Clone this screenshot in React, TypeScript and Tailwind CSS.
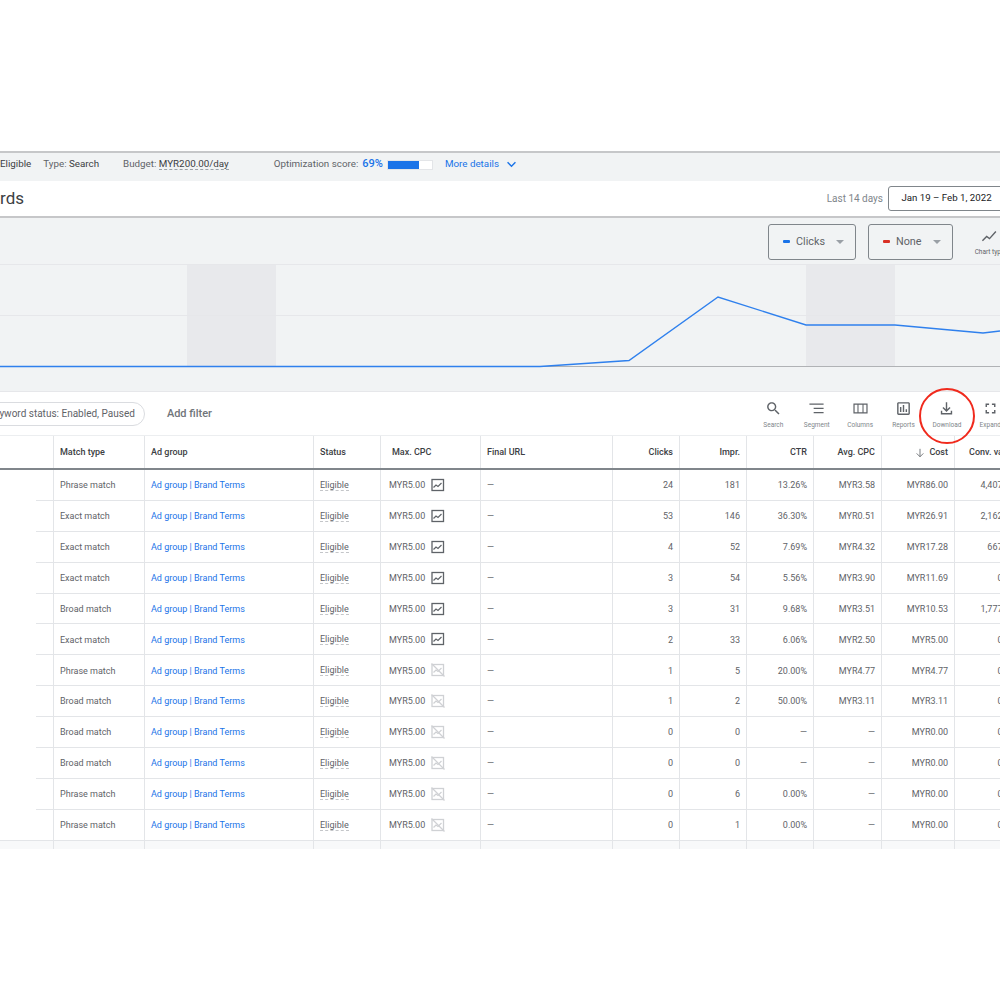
import { ReactNode } from "react";

const gridCols = "grid grid-cols-[54px_91px_169px_67px_100px_132px_67px_67px_67px_68px_73px_67px]";

const rows = [
  { match: "Phrase match", clicks: "24", impr: "181", ctr: "13.26%", cpc: "MYR3.58", cost: "MYR86.00", conv: "4,407.00", trend: true },
  { match: "Exact match", clicks: "53", impr: "146", ctr: "36.30%", cpc: "MYR0.51", cost: "MYR26.91", conv: "2,162.00", trend: true },
  { match: "Exact match", clicks: "4", impr: "52", ctr: "7.69%", cpc: "MYR4.32", cost: "MYR17.28", conv: "667.00", trend: true },
  { match: "Exact match", clicks: "3", impr: "54", ctr: "5.56%", cpc: "MYR3.90", cost: "MYR11.69", conv: "0.00", trend: true },
  { match: "Broad match", clicks: "3", impr: "31", ctr: "9.68%", cpc: "MYR3.51", cost: "MYR10.53", conv: "1,777.00", trend: true },
  { match: "Exact match", clicks: "2", impr: "33", ctr: "6.06%", cpc: "MYR2.50", cost: "MYR5.00", conv: "0.00", trend: true },
  { match: "Phrase match", clicks: "1", impr: "5", ctr: "20.00%", cpc: "MYR4.77", cost: "MYR4.77", conv: "0.00", trend: false },
  { match: "Broad match", clicks: "1", impr: "2", ctr: "50.00%", cpc: "MYR3.11", cost: "MYR3.11", conv: "0.00", trend: false },
  { match: "Broad match", clicks: "0", impr: "0", ctr: "—", cpc: "—", cost: "MYR0.00", conv: "0.00", trend: false },
  { match: "Broad match", clicks: "0", impr: "0", ctr: "—", cpc: "—", cost: "MYR0.00", conv: "0.00", trend: false },
  { match: "Phrase match", clicks: "0", impr: "6", ctr: "0.00%", cpc: "—", cost: "MYR0.00", conv: "0.00", trend: false },
  { match: "Phrase match", clicks: "0", impr: "1", ctr: "0.00%", cpc: "—", cost: "MYR0.00", conv: "0.00", trend: false },
];

function ToolIcon({ label, children }: { label: string; children: ReactNode }) {
  return (
    <div className="flex w-[43.4px] shrink-0 flex-col items-center pt-[1px]">
      <svg viewBox="0 0 24 24" className="h-[17px] w-[17px] fill-[#5f6368]">
        {children}
      </svg>
      <span className="mt-[4px] whitespace-nowrap text-[6.5px] leading-[8px] text-[#80868b]">{label}</span>
    </div>
  );
}

function TrendIcon({ active }: { active: boolean }) {
  return (
    <svg viewBox="0 0 14 14" fill="none" className="mb-[2px] ml-[6px] h-[14px] w-[14px]" stroke={active ? "#5f6368" : "#cfd1d4"}>
      <rect x="1" y="1.5" width="11.5" height="11" strokeWidth="1.3" />
      <path d="M2.5 9.500 5 7l2 1.500L10.500 5" strokeWidth="1.2" />
      {!active && <path d="M0.500 0.500 13.500 13.500" strokeWidth="1.2" />}
    </svg>
  );
}

function MetricButton({ label, color, width }: { label: string; color: string; width: string }) {
  return (
    <div className={`flex h-[36px] items-center rounded-[3px] border border-[#80868b] pl-[14px] ${width}`}>
      <span className={`h-[3px] w-[7px] rounded-[1px] ${color}`} />
      <span className="ml-[6px] pt-[1px] text-[10.8px] text-[#5f6368]">{label}</span>
      <span className="ml-auto mr-[11px] h-0 w-0 border-x-[4px] border-t-[4px] border-x-transparent border-t-[#9aa0a6]" />
    </div>
  );
}

function Th({ children, right }: { children: ReactNode; right?: boolean }) {
  return (
    <div className={`flex items-center whitespace-nowrap border-r border-[#e3e5e8] px-[6px] pt-[2px] text-[9px] font-medium text-[#3c4043] ${right ? "justify-end" : ""}`}>
      {children}
    </div>
  );
}

function Td({ children, right }: { children: ReactNode; right?: boolean }) {
  return (
    <div className={`flex items-center whitespace-nowrap border-b border-r border-[#e3e5e8] px-[6px] pt-[2px] text-[9px] text-[#5f6368] ${right ? "justify-end" : ""}`}>
      {children}
    </div>
  );
}

export default function App() {
  return (
    <div className="h-[1000px] w-[1000px] overflow-hidden bg-white font-['Roboto',sans-serif]">
      <div className="h-[151px]" />

      <div className="flex h-[30px] items-center border-t-2 border-[#c6c7c9] bg-[#f1f3f4] pb-[5px] text-[9.8px] text-[#5f6368]">
        <span className="text-[#3c4043]">Eligible</span>
        <span className="ml-[12px]">Type: <span className="text-[#3c4043]">Search</span></span>
        <span className="ml-[24px]">Budget: <span className="border-b border-dashed border-[#9aa0a6] text-[#3c4043]">MYR200.00/day</span></span>
        <span className="ml-[45px]">Optimization score:</span>
        <span className="ml-[4px] text-[11px] font-medium text-[#1a73e8]">69%</span>
        <div className="ml-[4px] h-[10px] w-[46px] border border-[#e3e5e8] bg-white">
          <div className="h-full w-[31px] bg-[#1a73e8]" />
        </div>
        <span className="ml-[12px] text-[#1a73e8]">More details</span>
        <svg viewBox="0 0 12 8" fill="none" stroke="#1a73e8" strokeWidth="1.6" className="ml-[7px] h-[7px] w-[11px]">
          <path d="M1.500 1.500 6 6l4.500-4.500" />
        </svg>
      </div>

      <div className="flex h-[37px] items-center justify-between border-b-2 border-[#c6c7c9] bg-white">
        <div className="w-[24px] overflow-hidden" dir="rtl">
          <span className="text-[17px] text-[#3c4043]" dir="ltr">Keywords</span>
        </div>
        <div className="flex items-center">
          <span className="text-[10px] text-[#80868b]">Last 14 days</span>
          <div className="-mr-[6px] ml-[5px] flex h-[25px] w-[118px] items-center justify-center rounded-[3px] border border-[#80868b] pr-[1px] text-[9.7px] text-[#202124]">
            Jan 19 – Feb 1, 2022
          </div>
        </div>
      </div>

      <div className="flex h-[46px] items-center justify-end bg-[#f1f3f4] pt-[1px]">
        <MetricButton label="Clicks" color="bg-[#1a73e8]" width="w-[88px]" />
        <div className="ml-[12px]">
          <MetricButton label="None" color="bg-[#d93025]" width="w-[85px]" />
        </div>
        <div className="-mr-[13px] ml-[13px] flex w-[47px] shrink-0 flex-col items-center">
          <svg viewBox="0 0 24 24" className="h-[17px] w-[17px] fill-none stroke-[#5f6368] stroke-2">
            <path d="M2 18l6-6 4 3 9-10" />
          </svg>
          <span className="mt-[3px] whitespace-nowrap text-[6.5px] leading-[8px] text-[#5f6368]">Chart type</span>
        </div>
      </div>

      <svg viewBox="0 0 1000 128" className="block h-[128px] w-[1000px] bg-[#f1f3f4]">
        <rect x="187" y="0" width="89" height="102" fill="#e8e9ec" />
        <rect x="806" y="0" width="89" height="102" fill="#e8e9ec" />
        <path d="M0 0.500H1000M0 51.500H1000" stroke="#e6e7ea" strokeWidth="1" />
        <path d="M0 102.500H1000" stroke="#b0b2b5" strokeWidth="1.200" />
        <path d="M0 102.500H540L629 96.500L718 33L806 61H895L983 69L1000 67" fill="none" stroke="#2f80ed" strokeWidth="1.400" />
        <path d="M0 127.500H1000" stroke="#e6e7ea" strokeWidth="1" />
      </svg>

      <div className="relative flex h-[43px] items-center bg-white">
        <div className="-ml-[22px] flex h-[24px] items-center rounded-full border border-[#dadce0] px-[9px] text-[10px] text-[#5f6368]">
          Keyword status: Enabled, Paused
        </div>
        <span className="ml-[22px] pt-[1px] text-[11px] font-medium text-[#70757a]">Add filter</span>
        <div className="-mr-[12px] ml-auto flex">
          <ToolIcon label="Search">
            <path d="M15.500 14h-.79l-.28-.27C15.410 12.590 16 11.110 16 9.500 16 5.910 13.090 3 9.500 3S3 5.910 3 9.500 5.910 16 9.500 16c1.610 0 3.090-.59 4.230-1.570l.27.28v.79l5 4.990L20.490 19l-4.990-5zm-6 0C7.010 14 5 11.990 5 9.500S7.010 5 9.500 5 14 7.010 14 9.500 11.990 14 9.500 14z" />
          </ToolIcon>
          <ToolIcon label="Segment">
            <path d="M2 5h20v1.800H2zM8 11h14v1.800H8zM8 17h14v1.800H8z" />
          </ToolIcon>
          <ToolIcon label="Columns">
            <path d="M2 5h20v14H2zm1.700 1.700v10.600h4V6.700zm5.500 0v10.600h5.600V6.700zm7.100 0v10.600h4V6.700z" fillRule="evenodd" />
          </ToolIcon>
          <ToolIcon label="Reports">
            <path d="M19 3H5c-1.100 0-2 .9-2 2v14c0 1.100.9 2 2 2h14c1.100 0 2-.9 2-2V5c0-1.100-.9-2-2-2zm0 16H5V5h14v14zM7 10h2v7H7zm4-3h2v10h-2zm4 6h2v4h-2z" />
          </ToolIcon>
          <ToolIcon label="Download">
            <path d="M11 3h2v10.200l3.300-3.300 1.400 1.400L12 17l-5.700-5.700 1.400-1.400L11 13.200zM4 15h2v3.500h12V15h2v5.500H4z" />
          </ToolIcon>
          <ToolIcon label="Expand">
            <path d="M7 14H5v5h5v-2H7v-3zm-2-4h2V7h3V5H5v5zm12 7h-3v2h5v-5h-2v3zM14 5v2h3v3h2V5h-5z" />
          </ToolIcon>
        </div>
        <div className="absolute left-[919px] top-[-4px] h-[56px] w-[56px] rounded-full border-2 border-[#f02a1d]" />
      </div>

      <div className="w-[1000px] overflow-hidden">
        <div className={`${gridCols} h-[35px] w-[1022px] border-b-2 border-t border-b-[#80868b] border-t-[#eceef0]`}>
          <Th>{""}</Th>
          <Th>Match type</Th>
          <Th>Ad group</Th>
          <Th>Status</Th>
          <Th><span className="ml-[5px]">Max. CPC</span></Th>
          <Th>Final URL</Th>
          <Th right>Clicks</Th>
          <Th right>Impr.</Th>
          <Th right>CTR</Th>
          <Th right>Avg. CPC</Th>
          <Th right>
            <svg viewBox="0 0 12 12" fill="none" stroke="#5f6368" strokeWidth="1" className="mr-[4px] h-[10px] w-[10px]">
              <path d="M6 1v9.500M2 6.500l4 4 4-4" />
            </svg>
            Cost
          </Th>
          <Th right>Conv. value</Th>
        </div>

        {rows.map((row, index) => (
          <div key={index} className={`${gridCols} h-[30.9px] w-[1022px]`}>
            <div className={`border-r border-[#e3e5e8] ${index === rows.length - 1 ? "" : "pl-[36px]"}`}>
              <div className="h-full border-b border-[#e3e5e8]" />
            </div>
            <Td>{row.match}</Td>
            <Td><span className="text-[#1a73e8]">Ad group | Brand Terms</span></Td>
            <Td><span className="mb-[1px] border-b border-dashed border-[#c4c6c9] leading-[10px]">Eligible</span></Td>
            <Td><span className="ml-[2px]">MYR5.00</span><TrendIcon active={row.trend} /></Td>
            <Td>—</Td>
            <Td right>{row.clicks}</Td>
            <Td right>{row.impr}</Td>
            <Td right>{row.ctr}</Td>
            <Td right>{row.cpc}</Td>
            <Td right>{row.cost}</Td>
            <Td right>{row.conv}</Td>
          </div>
        ))}

        <div className={`${gridCols} h-[8px] w-[1022px] bg-[#f8f9fa]`}>
          {Array.from({ length: 12 }).map((_, index) => (
            <div key={index} className="border-r border-[#e3e5e8]" />
          ))}
        </div>
      </div>
    </div>
  );
}
